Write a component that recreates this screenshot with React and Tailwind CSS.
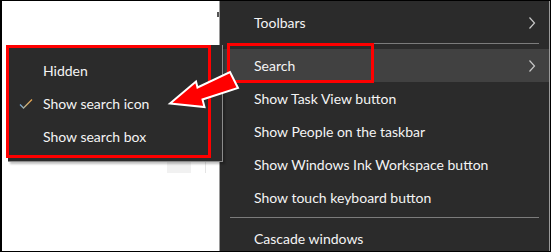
import React from "react";

const font = { fontFamily: 'Lato, "Noto Sans", sans-serif' };

function Chevron() {
  return (
    <svg width="8" height="14" viewBox="0 0 8 14" className="flex-none">
      <polyline points="1.5,1.5 6.5,7 1.5,12.5" fill="none" stroke="#c8c8c8" strokeWidth="1.2" />
    </svg>
  );
}

function Check() {
  return (
    <svg width="14" height="12" viewBox="0 0 14 12">
      <defs>
        <linearGradient id="chk" x1="0" y1="0" x2="1" y2="0">
          <stop offset="0" stopColor="#6aa6e0" />
          <stop offset="0.5" stopColor="#c9b07a" />
          <stop offset="1" stopColor="#e8a24a" />
        </linearGradient>
      </defs>
      <polyline points="1,6.5 4.5,10 13,1.5" fill="none" stroke="url(#chk)" strokeWidth="1.3" />
    </svg>
  );
}

function MenuRow({ label, sub, active }) {
  return (
    <div
      className={`flex h-[33px] items-center justify-between pl-[34px] pr-[13px] text-[14px] text-[#f4f4f4] ${
        active ? "bg-[#414141]" : ""
      }`}
    >
      <span>{label}</span>
      {sub && <Chevron />}
    </div>
  );
}

function Separator({ className }) {
  return <div className={`mx-[10px] h-px bg-[#7c7c7c] ${className}`} />;
}

export default function App() {
  return (
    <div
      className="relative flex h-[252px] w-[551px] overflow-hidden border-t border-r border-b border-l-2 border-black bg-white"
      style={font}
    >
      {/* desktop area */}
      <div className="relative w-[217px] flex-none bg-white">
        <div className="absolute left-[215px] top-[11px] h-[5px] w-[2px] bg-[#555]" />
        <div className="absolute left-[165px] top-[160px] h-[12px] w-[24px] bg-[#f1f1f1]" />
        <div className="absolute left-[203px] top-[160px] h-[12px] w-px bg-[#e4e4e4]" />
      </div>

      {/* taskbar context menu */}
      <div className="w-[331px] flex-none border-x border-[#9a9a9a] bg-[#2b2b2b] pt-[5px]">
        <MenuRow label="Toolbars" sub />
        <Separator className="mt-[4px] mb-[5px]" />
        <MenuRow label="Search" sub active />
        <MenuRow label="Show Task View button" />
        <MenuRow label="Show People on the taskbar" />
        <MenuRow label="Show Windows Ink Workspace button" />
        <MenuRow label="Show touch keyboard button" />
        <Separator className="mt-[3px] mb-[4px]" />
        <MenuRow label="Cascade windows" />
      </div>

      {/* search submenu */}
      <div className="absolute left-[6px] top-[44px] h-[117px] w-[215px] border-r border-b border-[#8c8c8c] bg-[#2b2b2b] pt-[9px] shadow-[2px_2px_2px_rgba(0,0,0,0.25)]">
        {[
          { label: "Hidden" },
          { label: "Show search icon", checked: true },
          { label: "Show search box" },
        ].map((item) => (
          <div key={item.label} className="flex h-[33px] items-center text-[14px] text-[#f4f4f4]">
            <span className="flex w-[35px] flex-none justify-center pl-[1px]">
              {item.checked && <Check />}
            </span>
            <span>{item.label}</span>
          </div>
        ))}
      </div>

      {/* annotations */}
      <div className="absolute left-[4px] top-[44px] h-[113px] w-[205px] border-[3px] border-[#ff0000]" />
      <div className="absolute left-[225px] top-[42px] h-[40px] w-[147px] border-[3px] border-[#ff0000]" />
      <svg className="absolute left-[-2px] top-[-1px]" width="551" height="252" viewBox="0 0 551 252">
        <polygon
          points="170,103.5 196,81.5 197.5,87.5 230,72 238,88 202.5,99.5 204.5,107"
          fill="#ff0000"
          stroke="#ffffff"
          strokeWidth="2"
          strokeLinejoin="miter"
        />
      </svg>
    </div>
  );
}
